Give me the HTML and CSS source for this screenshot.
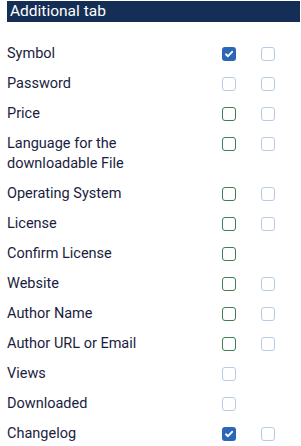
FILE: index.html
```html
<!DOCTYPE html>
<html>
<head>
    <title>Additional tab</title>
    <link rel="stylesheet" href="styles.css">
</head>
<body>
    <div class="panel">
        <div class="tab-title">Additional tab</div>

        <div class="fields">
            <div class="field">
                <span class="label">Symbol</span>
                <span class="cell"><span class="box checked"><svg viewBox="0 0 14 14" width="14" height="14"><path d="M4 7.3 L6 9.2 L10.1 4.8" fill="none" stroke="#fff" stroke-width="1.9" stroke-linecap="round" stroke-linejoin="round"/></svg></span></span>
                <span class="cell"><span class="box disabled"></span></span>
            </div>
            <div class="field">
                <span class="label">Password</span>
                <span class="cell"><span class="box disabled"></span></span>
                <span class="cell"><span class="box disabled"></span></span>
            </div>
            <div class="field">
                <span class="label">Price</span>
                <span class="cell"><span class="box"></span></span>
                <span class="cell"><span class="box disabled"></span></span>
            </div>
            <div class="field">
                <span class="label">Language for the<br>downloadable File</span>
                <span class="cell"><span class="box"></span></span>
                <span class="cell"><span class="box disabled"></span></span>
            </div>
            <div class="field">
                <span class="label">Operating System</span>
                <span class="cell"><span class="box"></span></span>
                <span class="cell"><span class="box disabled"></span></span>
            </div>
            <div class="field">
                <span class="label">License</span>
                <span class="cell"><span class="box"></span></span>
                <span class="cell"><span class="box disabled"></span></span>
            </div>
            <div class="field">
                <span class="label">Confirm License</span>
                <span class="cell"><span class="box"></span></span>
                <span class="cell"></span>
            </div>
            <div class="field">
                <span class="label">Website</span>
                <span class="cell"><span class="box"></span></span>
                <span class="cell"><span class="box disabled"></span></span>
            </div>
            <div class="field">
                <span class="label">Author Name</span>
                <span class="cell"><span class="box"></span></span>
                <span class="cell"><span class="box disabled"></span></span>
            </div>
            <div class="field">
                <span class="label">Author URL or Email</span>
                <span class="cell"><span class="box"></span></span>
                <span class="cell"><span class="box disabled"></span></span>
            </div>
            <div class="field">
                <span class="label">Views</span>
                <span class="cell"><span class="box disabled"></span></span>
                <span class="cell"></span>
            </div>
            <div class="field">
                <span class="label">Downloaded</span>
                <span class="cell"><span class="box disabled"></span></span>
                <span class="cell"></span>
            </div>
            <div class="field">
                <span class="label">Changelog</span>
                <span class="cell"><span class="box checked"><svg viewBox="0 0 14 14" width="14" height="14"><path d="M4 7.3 L6 9.2 L10.1 4.8" fill="none" stroke="#fff" stroke-width="1.9" stroke-linecap="round" stroke-linejoin="round"/></svg></span></span>
                <span class="cell"><span class="box disabled"></span></span>
            </div>
        </div>
    </div>
</body>
</html>
```

FILE: styles.css
```css
body {
    margin: 0;
    font-family: Roboto, "Liberation Sans", sans-serif;
    font-size: 14.5px;
    color: #1a1d40;
    background: #fff;
}
.panel {
    padding: 1px 1px 0 7px;
}
.tab-title {
    background-color: #142e55;
    color: #fff;
    height: 21px;
    line-height: 21px;
    padding-left: 3px;
    font-size: 15.5px;
}
.fields {
    margin-top: 17px;
}
.field {
    display: flex;
    align-items: flex-start;
    padding: 5px 0;
    line-height: 20px;
}
.label {
    flex: 1;
}
.cell {
    width: 39px;
    height: 20px;
    display: flex;
    align-items: center;
}
.box {
    box-sizing: border-box;
    width: 14px;
    height: 14px;
    border: 1px solid #3f7d52;
    border-radius: 3px;
    display: flex;
}
.box.disabled {
    border-color: #b7cbe6;
}
.box.checked {
    border: none;
    background-color: #2b66b7;
}
```
